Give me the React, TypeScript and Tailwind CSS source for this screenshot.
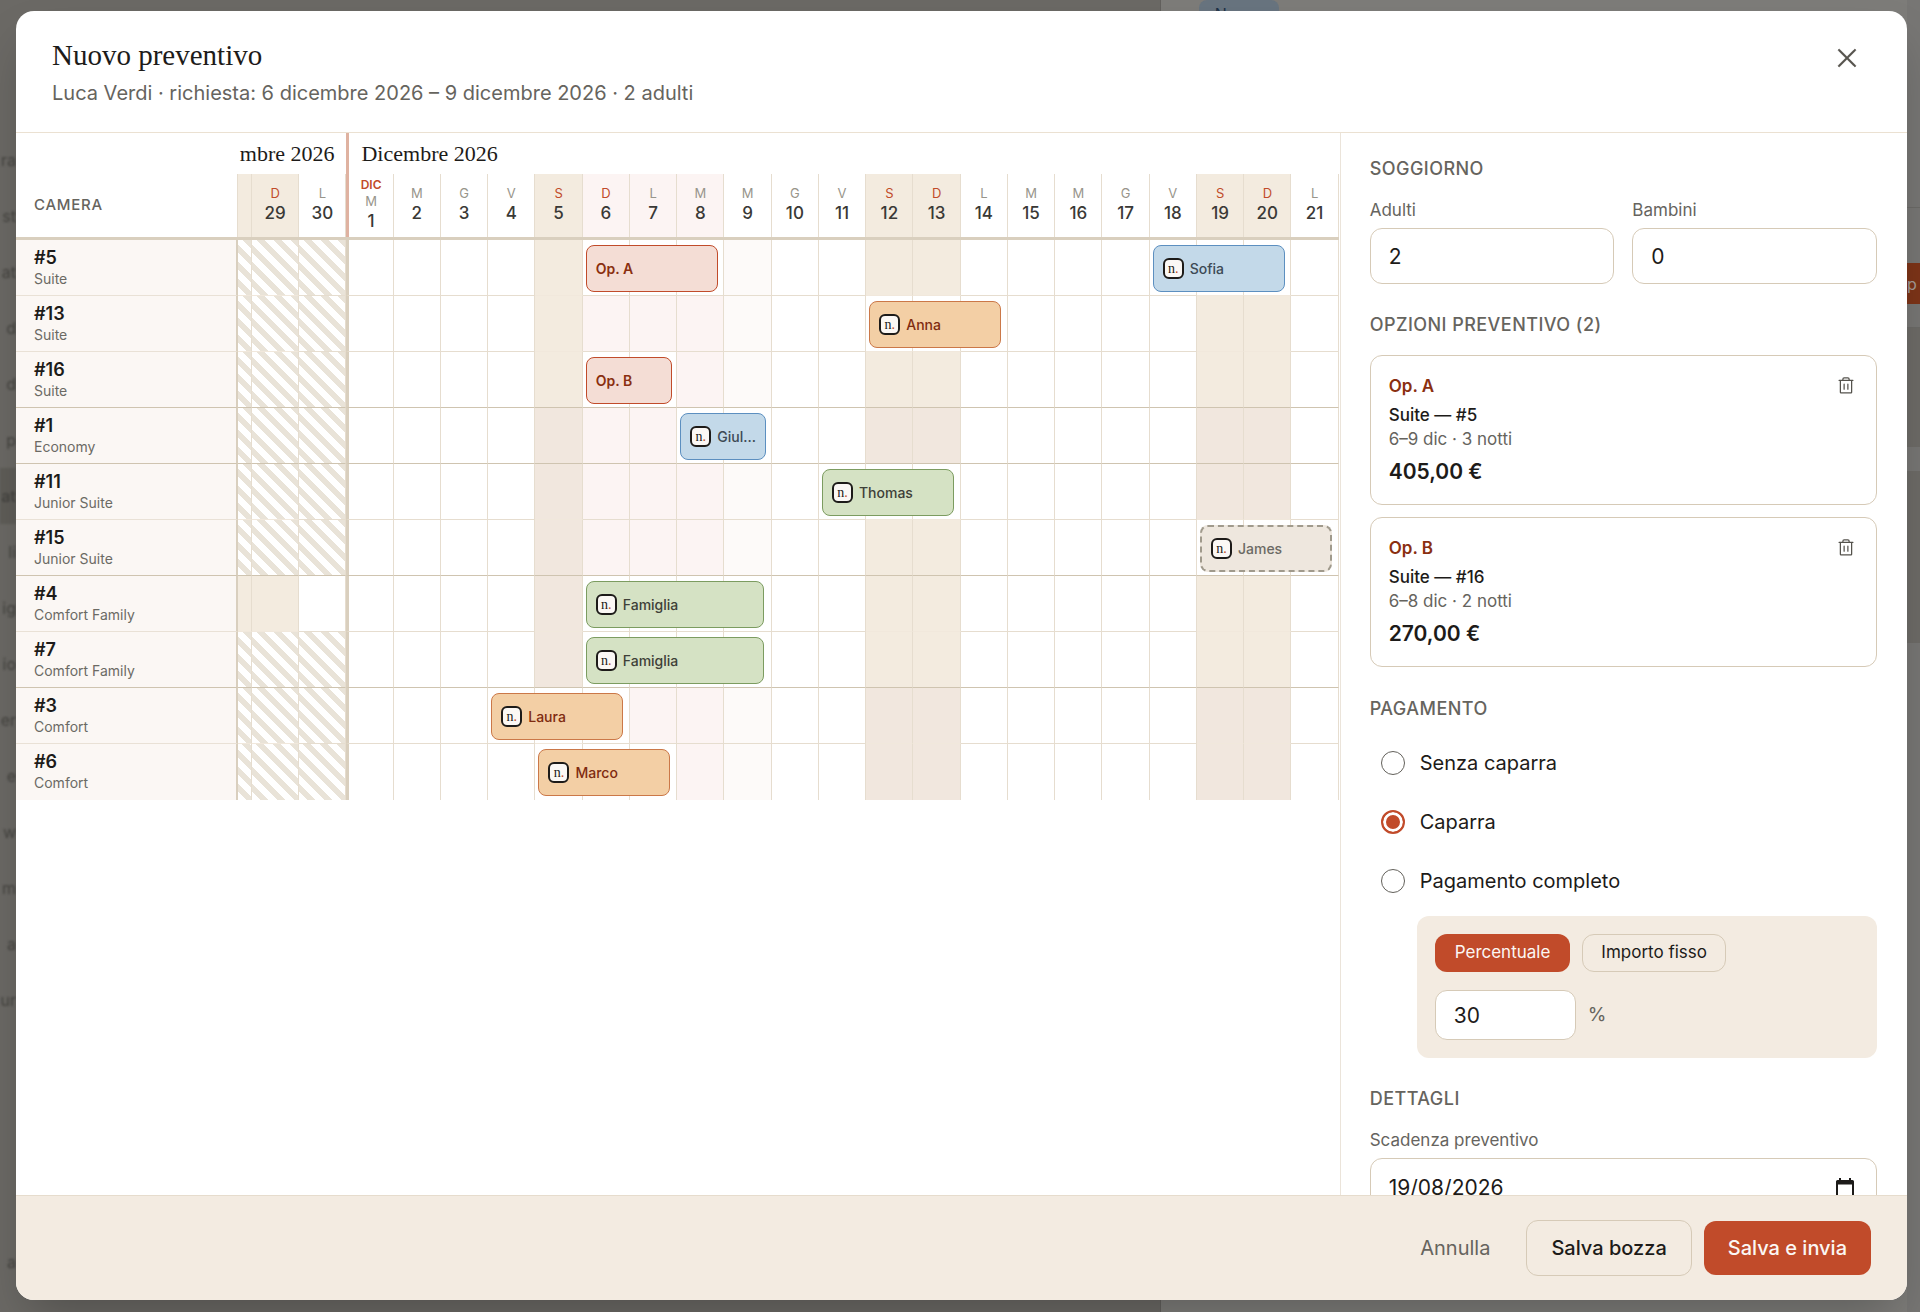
import { useState } from "react";
import { PiTrash, PiX } from "react-icons/pi";
import clsx from "clsx";

type Tone = "quote" | "blue" | "orange" | "green" | "draft";

interface Booking {
  label: string;
  from: number;
  nights: number;
  tone: Tone;
}

interface Room {
  number: string;
  type: string;
  lastOfGroup?: boolean;
  open?: boolean;
  tinted?: number[];
  bookings: Booking[];
}

// Day indexes: -2 = 28 nov, -1 = 29 nov, 0 = 30 nov, 1..21 = december
const days = Array.from({ length: 24 }, (_, i) => i - 2);
const weekdays = ["D", "L", "M", "M", "G", "V", "S"];

const rooms: Room[] = [
  { number: "#5", type: "Suite", bookings: [
    { label: "Op. A", from: 6, nights: 3, tone: "quote" },
    { label: "Sofia", from: 18, nights: 3, tone: "blue" },
  ] },
  { number: "#13", type: "Suite", bookings: [{ label: "Anna", from: 12, nights: 3, tone: "orange" }] },
  { number: "#16", type: "Suite", lastOfGroup: true, bookings: [{ label: "Op. B", from: 6, nights: 2, tone: "quote" }] },
  { number: "#1", type: "Economy", lastOfGroup: true, tinted: [5, 12, 13, 19, 20], bookings: [{ label: "Giul…", from: 8, nights: 2, tone: "blue" }] },
  { number: "#11", type: "Junior Suite", tinted: [5, 19, 20], bookings: [{ label: "Thomas", from: 11, nights: 3, tone: "green" }] },
  { number: "#15", type: "Junior Suite", lastOfGroup: true, tinted: [5], bookings: [{ label: "James", from: 19, nights: 3, tone: "draft" }] },
  { number: "#4", type: "Comfort Family", open: true, tinted: [5], bookings: [{ label: "Famiglia", from: 6, nights: 4, tone: "green" }] },
  { number: "#7", type: "Comfort Family", lastOfGroup: true, tinted: [5], bookings: [{ label: "Famiglia", from: 6, nights: 4, tone: "green" }] },
  { number: "#3", type: "Comfort", tinted: [12, 13, 19, 20], bookings: [{ label: "Laura", from: 4, nights: 3, tone: "orange" }] },
  { number: "#6", type: "Comfort", tinted: [12, 13, 19, 20], bookings: [{ label: "Marco", from: 5, nights: 3, tone: "orange" }] },
];

const options = [
  { name: "Op. A", room: "Suite — #5", stay: "6–9 dic · 3 notti", price: "405,00 €" },
  { name: "Op. B", room: "Suite — #16", stay: "6–8 dic · 2 notti", price: "270,00 €" },
];

const payments = ["Senza caparra", "Caparra", "Pagamento completo"];

// Ends of the menu entries that stay visible beside the dialog
const menuEnds = ["ra", "st", "at", "d", "d", "p", "at", "li", "ig", "io", "er", "e", "w", "m", "a", "ur"];

const toneClasses: Record<Tone, string> = {
  quote: "border-[#c14b2a] bg-[#f4ddd5] text-[#8a2f10] font-semibold",
  blue: "border-[#5c8fc0] bg-[#c3d9e9] text-[#3d4a55] font-medium",
  orange: "border-[#cb7848] bg-[#f3cfa5] text-[#7f2b10] font-medium",
  green: "border-[#7c9c60] bg-[#d5e2c4] text-[#3e4038] font-medium",
  draft: "border-2 border-dashed border-[#a09a8c] bg-[#eee7de] text-[#6b6a64] font-medium",
};

const gridCols = "grid grid-cols-[222px_14px_repeat(23,minmax(0,1fr))]";

const isWeekend = (day: number) => [-2, -1, 5, 6, 12, 13, 19, 20].includes(day);

function weekdayOf(day: number) {
  return weekdays[(day + 8) % 7];
}

function cellBackground(room: Room, day: number) {
  if (room.bookings.some((b) => day >= b.from && day < b.from + b.nights)) return "bg-white";
  if (day < 1 && !room.open) {
    return "bg-[repeating-linear-gradient(45deg,#ffffff_0px,#ffffff_6px,#e9e3d8_6px,#e9e3d8_12px)]";
  }
  if (room.tinted?.includes(day)) return "bg-[#f1e7de]";
  if (day >= 6 && day <= 8) return "bg-[#fcf4f3]";
  if (day === 9) return "bg-[#fdfaf9]";
  if (isWeekend(day)) return "bg-[#f3ebdf]";
  return "bg-white";
}

function BookingBar({ booking }: { booking: Booking }) {
  return (
    <button
      type="button"
      className={clsx(
        "z-10 ml-[3px] mt-[5px] flex h-[47px] items-center gap-1.5 rounded-lg border px-[9px] text-left text-sm",
        toneClasses[booking.tone],
      )}
      style={{
        gridRow: 1,
        gridColumn: `${booking.from + 4} / span ${booking.nights}`,
        width: booking.nights * 46 - 6,
      }}
    >
      {booking.tone !== "quote" && (
        <span className="flex size-[21px] shrink-0 items-center justify-center rounded-md border-2 border-[#1d1b19] bg-[#fbf8f5] font-['Liberation_Serif',serif] text-sm leading-none text-[#1d1b19]">
          n<span className="text-[#c14b2a]">.</span>
        </span>
      )}
      <span className="whitespace-nowrap">{booking.label}</span>
    </button>
  );
}

function Calendar() {
  return (
    <section className="min-w-0 flex-1 overflow-hidden pr-px" aria-label="Calendario camere">
      <div className={clsx(gridCols, "h-[41px] font-['Liberation_Serif',serif] text-[22px] text-[#1d1b19]")}>
        <div className="col-start-2 col-end-5 flex items-center justify-end whitespace-nowrap pr-3">mbre 2026</div>
        <div className="col-start-5 -col-end-1 flex items-center border-l-[3px] border-[#dfb2a1] pl-3">
          Dicembre 2026
        </div>
      </div>

      <div className={clsx(gridCols, "h-[66px] border-b-[3px] border-[#d9cfbe]")}>
        <div className="flex items-center border-r border-[#e6ddcf] pl-[18px] text-[15px] font-medium tracking-wider text-[#66645e]">
          CAMERA
        </div>
        {days.map((day) => (
          <div
            key={day}
            className={clsx(
              "flex flex-col items-center justify-center overflow-hidden border-r pb-0.5 text-[13px] leading-4",
              day === 1 ? "border-l-[3px] border-l-[#dfb2a1] border-r-[#e6ddcf]" : "border-[#e6ddcf]",
              day >= 6 && day <= 8 ? "bg-[#fcf4f3]" : isWeekend(day) ? "bg-[#f3ebdf]" : "bg-white",
            )}
          >
            {day > -2 && (
              <>
                {day === 1 && <span className="text-xs font-semibold leading-4 text-[#c14b2a]">DIC</span>}
                <span className={isWeekend(day) ? "text-[#c14b2a]" : "text-[#98958b]"}>{weekdayOf(day)}</span>
                <span className="text-[17px] font-medium leading-6 text-[#3a3936]">{day < 1 ? 30 + day : day}</span>
              </>
            )}
          </div>
        ))}
      </div>

      {rooms.map((room, index) => (
        <div key={room.number} className={clsx(gridCols, "h-14")}>
          <div
            className={clsx(
              "row-start-1 flex flex-col justify-center border-r-2 border-r-[#d9cfbe] bg-[#fbf7f4] pl-[18px]",
              index < rooms.length - 1 && "border-b",
              room.lastOfGroup ? "border-b-[#cfc4b0]" : "border-b-[#e9e1d6]",
            )}
          >
            <span className="text-lg font-semibold leading-[22px] text-[#1d1b19]">{room.number}</span>
            <span className="text-sm leading-5 text-[#6b6a64]">{room.type}</span>
          </div>
          {days.map((day) => (
            <div
              key={day}
              className={clsx(
                "row-start-1 border-r border-r-[#e6ddcf]",
                index < rooms.length - 1 && "border-b",
                room.lastOfGroup ? "border-b-[#cfc4b0]" : isWeekend(day) && day !== 6 ? "border-b-[#f1e8dc]" : "border-b-[#e6ddcf]",
                day === 1 && "border-l-[3px] border-l-[#d9cfbe]",
                cellBackground(room, day),
              )}
              style={{ gridColumn: day + 4 }}
            />
          ))}
          {room.bookings.map((booking) => (
            <BookingBar key={booking.from} booking={booking} />
          ))}
        </div>
      ))}
    </section>
  );
}

const headingClass = "text-lg font-medium leading-6 tracking-wide text-[#66645e]";
const labelClass = "text-[17px] leading-6 text-[#66645e]";
const fieldClass = "rounded-xl border border-[#d6cab7] bg-white px-[18px] text-[21px] text-[#1d1b19]";

function QuoteForm() {
  const [payment, setPayment] = useState("Caparra");

  return (
    <aside className="w-[30%] shrink-0 overflow-hidden border-l border-[#ebe4da] pl-[29px] pr-[30px] pt-6">
      <h3 className={headingClass}>SOGGIORNO</h3>
      <div className="mt-[17px] grid grid-cols-2 gap-[18px]">
        <div className="flex flex-col gap-1.5">
          <label htmlFor="adults" className={labelClass}>Adulti</label>
          <input id="adults" defaultValue="2" className={clsx(fieldClass, "h-14 w-full")} />
        </div>
        <div className="flex flex-col gap-1.5">
          <label htmlFor="children" className={labelClass}>Bambini</label>
          <input id="children" defaultValue="0" className={clsx(fieldClass, "h-14 w-full")} />
        </div>
      </div>

      <h3 className={clsx(headingClass, "mt-[29px]")}>OPZIONI PREVENTIVO (2)</h3>
      <div className="mt-[18px] flex flex-col gap-3">
        {options.map((option) => (
          <div key={option.name} className="flex h-[150px] items-start justify-between rounded-xl border border-[#d6cab7] px-[18px] pt-[18px]">
            <div>
              <p className="text-[17px] font-semibold leading-6 text-[#8a2f10]">{option.name}</p>
              <p className="mt-[5px] text-[17px] font-medium leading-6 text-[#1d1b19]">{option.room}</p>
              <p className="text-[17px] leading-6 text-[#66645e]">{option.stay}</p>
              <p className="mt-[5px] text-[21px] font-semibold leading-8 text-[#1d1b19]">{option.price}</p>
            </div>
            <button type="button" aria-label={`Elimina ${option.name}`} className="mr-0.5 mt-0.5 text-[#55534d]">
              <PiTrash className="size-5" />
            </button>
          </div>
        ))}
      </div>

      <h3 className={clsx(headingClass, "mt-[30px]")}>PAGAMENTO</h3>
      <div className="mt-3">
        {payments.map((name) => (
          <label key={name} className="flex h-[59px] items-center gap-[15px] pl-[11px] text-xl text-[#1d1b19]">
            <input
              type="radio"
              name="payment"
              checked={payment === name}
              onChange={() => setPayment(name)}
              className="size-6 appearance-none rounded-full border border-[#63615b] bg-white checked:border-2 checked:border-[#c14b2a] checked:bg-[#c14b2a] checked:shadow-[inset_0_0_0_3px_#ffffff]"
            />
            {name}
          </label>
        ))}
      </div>
      <div className="ml-[47px] mt-1.5 rounded-xl bg-[#f3ebe1] p-[18px]">
        <div className="flex gap-3">
          <button type="button" className="h-[38px] rounded-xl bg-[#c14b2a] px-5 text-[17px] text-[#fbf7f4]">Percentuale</button>
          <button type="button" className="h-[38px] rounded-xl border border-[#d6cab7] px-[18px] text-[17px] text-[#1d1b19]">Importo fisso</button>
        </div>
        <div className="mt-[18px] flex items-center gap-3">
          <input aria-label="Percentuale caparra" defaultValue="30" className={clsx(fieldClass, "h-[50px] w-[141px]")} />
          <span className="text-[19px] text-[#66645e]">%</span>
        </div>
      </div>

      <h3 className={clsx(headingClass, "mt-[29px]")}>DETTAGLI</h3>
      <div className="mt-[17px] flex flex-col gap-1.5">
        <label htmlFor="expiry" className={labelClass}>Scadenza preventivo</label>
        <div className={clsx(fieldClass, "flex h-[60px] shrink-0 items-center justify-between")}>
          <input id="expiry" defaultValue="19/08/2026" className="min-w-0 flex-1 outline-none" />
          <button type="button" aria-label="Apri calendario" className="mr-1">
            <svg viewBox="0 0 18 20" className="h-5 w-[18px]" fill="currentColor">
              <path d="M3 0h2v2h8V0h2v2h1.500a1.500 1.500 0 0 1 1.500 1.500v15a1.500 1.500 0 0 1-1.500 1.500h-15A1.500 1.500 0 0 1 0 18.500v-15A1.500 1.500 0 0 1 1.500 2H3zM2 6.500V18h14V6.500z" fillRule="evenodd" />
            </svg>
          </button>
        </div>
      </div>
    </aside>
  );
}

// Dimmed page that shows around the dialog
function PageBehind() {
  return (
    <div aria-hidden="true" className="absolute inset-0 flex">
      <div className="w-[1161px] border-r border-[#62605d] bg-[#6b6965] pt-[132px]">
        <ul className="w-4 text-base text-[#454440] blur-[1px]">
          {menuEnds.map((text, index) => (
            <li
              key={index}
              className={clsx("flex h-14 items-center justify-end whitespace-nowrap", index === 6 && "bg-[#5f5d58] font-semibold")}
            >
              {text}
            </li>
          ))}
          <li className="mt-[206px] flex h-14 items-center justify-end">a</li>
        </ul>
      </div>
      <div className="flex flex-1 items-start justify-between bg-[#7d7c79]">
        <span className="ml-[38px] h-7 w-20 rounded-b-2xl rounded-t-lg bg-[#68747f] text-center text-base leading-7 text-[#1c3146]">Nuova</span>
        <div className="flex h-full w-[13px] flex-col bg-[#777674]">
          <div className="h-[207px]" />
          <div className="h-14 border-t border-[#6b6a67]" />
          <div className="flex h-[41px] items-center bg-[#7d3418] text-base text-[#a59c96]">p</div>
          <div className="h-6 border-b border-[#6b6a67]" />
          <div className="h-[119px] bg-[#6d6b67]" />
          <div className="h-6" />
          <div className="h-[172px] bg-[#6d6b67]" />
        </div>
      </div>
    </div>
  );
}

export default function App() {
  return (
    <div className="relative flex h-screen overflow-hidden pb-3 pl-4 pr-[13px] pt-[11px] font-['Inter','Liberation_Sans',sans-serif]">
      <PageBehind />
      <div
        role="dialog"
        aria-labelledby="dialog-title"
        className="relative flex min-w-0 flex-1 flex-col overflow-hidden rounded-[18px] bg-white shadow-2xl"
      >
        <header className="flex h-[122px] shrink-0 items-start justify-between border-b border-[#ebe1d2] px-9 pt-[26px]">
          <div>
            <h2 id="dialog-title" className="font-['Liberation_Serif',serif] text-[29px] font-medium leading-9 text-[#1d1b19]">
              Nuovo preventivo
            </h2>
            <p className="mt-1.5 text-xl leading-7 text-[#66645e]">
              Luca Verdi · richiesta: 6 dicembre 2026 – 9 dicembre 2026 · 2 adulti
            </p>
          </div>
          <button type="button" aria-label="Chiudi" className="mr-2.5 mt-[7px] text-[#55534d]">
            <PiX className="size-7" strokeWidth={6} />
          </button>
        </header>

        <div className="flex min-h-0 flex-1">
          <Calendar />
          <QuoteForm />
        </div>

        <footer className="flex h-[105px] shrink-0 items-center justify-end gap-3 border-t border-[#e6dccd] bg-[#f3ebe1] px-9 text-xl">
          <button type="button" className="px-6 text-[#66645e]">Annulla</button>
          <button type="button" className="h-14 rounded-xl border border-[#d6cab7] px-6 font-medium text-[#1d1b19]">Salva bozza</button>
          <button type="button" className="h-[54px] rounded-xl bg-[#c14b2a] px-6 font-medium text-[#fbf7f4]">Salva e invia</button>
        </footer>
      </div>
    </div>
  );
}
